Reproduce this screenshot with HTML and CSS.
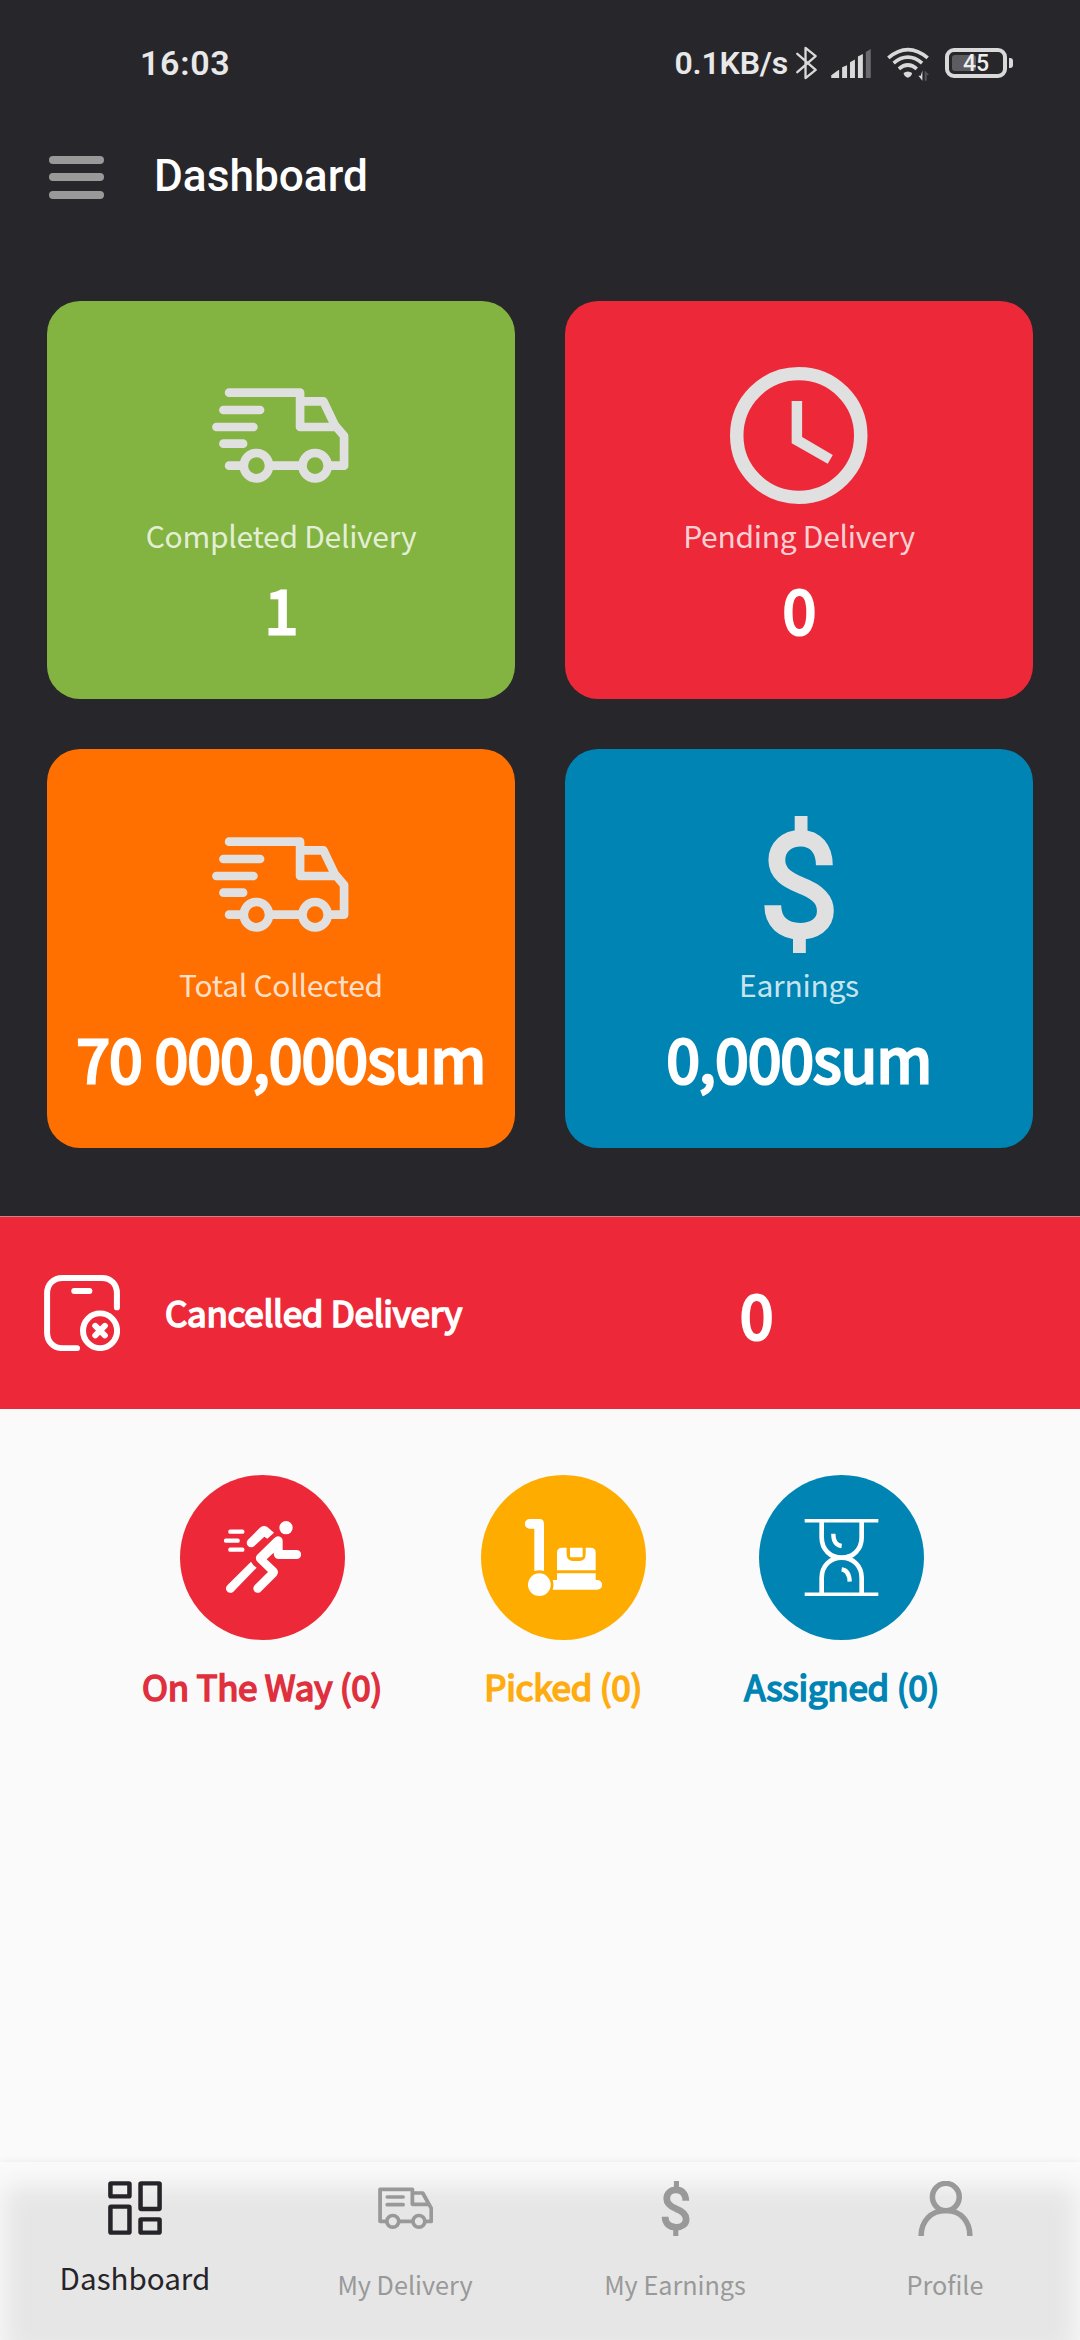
FILE: index.html
```html
<!DOCTYPE html>
<html lang="en">
<head>
<meta charset="utf-8">
<title>Dashboard</title>
<link rel="stylesheet" href="styles.css">
</head>
<body>
<svg class="sprite" aria-hidden="true">
  <symbol id="truck" viewBox="546 231 412 411">
    <g fill="none" stroke="currentColor" stroke-width="26" stroke-linecap="round" stroke-linejoin="round">
      <path d="M597 308H810V411H914M810 334H880L914 405L942 438V527H905M580 360H690M559 411H670M580 461H639M597 527H635M725 527H808"/>
      <circle cx="679" cy="527" r="38"/><circle cx="855" cy="527" r="38"/>
    </g>
  </symbol>
  <symbol id="dollar" viewBox="533 225 408 414" preserveAspectRatio="none">
    <path d="M813 374C813 325 787 292 743 292C700 292 672 320 672 358C672 400 705 418 742 434C790 452 816 475 816 512C816 552 782 573 741 573C692 573 660 545 660 495" fill="none" stroke="currentColor" stroke-width="50"/>
    <path d="M725 225H763V280H725ZM720 585H758V639H720Z" fill="currentColor"/>
  </symbol>
</svg>

<main class="screen">
  <section class="top">
    <div class="status">
      <span class="time">16:03</span>
      <div class="status-right">
        <span class="speed">0.1KB/s</span>
        <svg class="bt" viewBox="465 75 64 102"><path d="M469 98L525 147L494 172V80L525 105L469 154" fill="none" stroke="currentColor" stroke-width="7" stroke-linejoin="round" stroke-linecap="round"/></svg>
        <svg class="signal" viewBox="570 80 120 88"><path d="M570 168V160L592 144H594V168ZM603 168V135L618 129V168ZM627 168V120L642 112V168ZM651 168V103L666 95V168Z" fill="currentColor"/><path d="M675 168V89L690 80V168Z" fill="#6b6a6d"/></svg>
        <svg class="wifi" viewBox="738 80 127 101"><g fill="none" stroke="currentColor" stroke-width="11"><path d="M742 112Q801 62 861 112"/><path d="M758 128Q801 92 844 128"/><path d="M774 145Q801 122 828 145"/></g><path d="M788 158Q801 148 814 158Q812 169 801 172Q790 169 788 158Z" fill="currentColor"/><path d="M845 150V181L833 166H840Z" fill="currentColor"/><path d="M852 181V150L865 164H858V181Z" fill="#555458"/></svg>
        <div class="battery"><span class="charge"></span><span class="level">45</span></div>
      </div>
    </div>
    <header class="appbar">
      <div class="menu"><i></i><i></i><i></i></div>
      <h1>Dashboard</h1>
    </header>
    <div class="cards">
      <article class="card green">
        <svg class="icon"><use href="#truck"/></svg>
        <p class="label">Completed Delivery</p>
        <p class="value">1</p>
      </article>
      <article class="card red">
        <svg class="icon" viewBox="533 231 408 411" preserveAspectRatio="none"><ellipse cx="737" cy="436.500" rx="184" ry="185.500" fill="none" stroke="currentColor" stroke-width="40"/><path d="M716 333H747V441L838 495L823 521L716 460Z" fill="currentColor"/></svg>
        <p class="label">Pending Delivery</p>
        <p class="value">0</p>
      </article>
      <article class="card orange">
        <svg class="icon"><use href="#truck"/></svg>
        <p class="label">Total Collected</p>
        <p class="value">70 000,000sum</p>
      </article>
      <article class="card blue">
        <svg class="icon"><use href="#dollar"/></svg>
        <p class="label">Earnings</p>
        <p class="value">0,000sum</p>
      </article>
    </div>
  </section>

  <section class="cancelled">
    <svg class="cancel-icon" viewBox="128 225 221 229" preserveAspectRatio="none"><g fill="none" stroke="currentColor" stroke-width="17.500" stroke-linecap="round"><path d="M224 444H182C155 444 137 424 137 398V280C137 253 155 234 182 234H296C323 234 340 253 340 280V322"/><path d="M216 273H260"/><ellipse cx="291" cy="392" rx="49.500" ry="52"/><path d="M277 377L305 406M305 377L277 406"/></g></svg>
    <p class="cancel-text">Cancelled Delivery</p>
    <p class="cancel-value">0</p>
  </section>

  <section class="states">
    <div class="state way">
      <div class="disc"><svg viewBox="192 207 231 231"><circle cx="378" cy="233" r="20" fill="currentColor"/><path d="M211 245H247M198 272H233M211 299H247" fill="none" stroke="currentColor" stroke-width="13" stroke-linecap="round"/><path d="M264 269L299 234Q309 224 322 231L342 248L322 266L313 260L283 288A13 13 0 0 1 264 269Z" fill="currentColor"/><path d="M291 315L343 264Q352 255 363 262Q368 266 368 273V300H410A13 13 0 0 1 410 327H355Q341 325 341 308L320 328L350 356Q358 366 350 377L302 425A13 13 0 0 1 284 406L324 366L293 336Q283 326 291 315ZM273 335Q280 348 290 353L220 425A13 13 0 0 1 202 406Z" fill="currentColor"/></svg></div>
      <p>On The Way (0)</p>
    </div>
    <div class="state picked">
      <div class="disc"><svg viewBox="225 207 231 231"><g fill="currentColor"><path d="M239 207H268Q282 207 282 222V363Q268 358 253 363V236H239A14.500 14.500 0 0 1 239 207Z"/><circle cx="268" cy="404" r="34"/><path d="M321 361V308Q321 293 336 293H350V313Q350 333 369 333H388Q407 333 407 313V293H422Q437 293 437 308V361Z"/><path d="M360 293H398V318Q398 322 394 322H364Q360 322 360 318Z"/><path d="M321 370H437V390H442A14.500 14.500 0 0 1 442 419H308Q313 404 308 390H321Z"/></g></svg></div>
      <p>Picked (0)</p>
    </div>
    <div class="state assigned">
      <div class="disc"><svg viewBox="247 207 231 231"><g fill="none" stroke="currentColor"><path d="M252 212H473M252 433H473" stroke-width="11"/><path d="M303 212V262C303 300 330 323 363 323C396 323 423 300 423 262V212M303 433V384C303 346 330 323 363 323C396 323 423 346 423 384V433" stroke-width="14"/><path d="M338 251Q338 285 363 288M363 358Q386 361 387 395" stroke-width="13"/></g></svg></div>
      <p>Assigned (0)</p>
    </div>
  </section>

  <nav class="tabs">
    <a class="tab active">
      <svg viewBox="314 123 156 162" preserveAspectRatio="none"><g fill="none" stroke="currentColor" stroke-width="13" stroke-linejoin="round"><rect x="321" y="130" width="55" height="39" rx="2"/><rect x="408" y="130" width="55" height="77" rx="2"/><rect x="321" y="200" width="55" height="78" rx="2"/><rect x="408" y="238" width="55" height="40" rx="2"/></g></svg>
      <span>Dashboard</span>
    </a>
    <a class="tab">
      <svg viewBox="1094 123 160 165" preserveAspectRatio="none"><g fill="none" stroke="currentColor" stroke-width="11" stroke-linecap="round" stroke-linejoin="round"><path d="M1116 244H1100V148H1194V193H1238M1194 159H1224L1249 205V244H1234M1158 244H1192M1121 171H1167M1121 194H1167"/><circle cx="1137" cy="244" r="17.500"/><circle cx="1213" cy="244" r="17.500"/></g></svg>
      <span>My Delivery</span>
    </a>
    <a class="tab">
      <svg><use href="#dollar"/></svg>
      <span>My Earnings</span>
    </a>
    <a class="tab">
      <svg viewBox="1094 123 160 165" preserveAspectRatio="none"><g fill="none" stroke="currentColor" stroke-width="16"><ellipse cx="1175" cy="171" rx="39" ry="41"/><path d="M1103 288C1103 245 1130 212 1175 212C1220 212 1245 245 1245 288"/></g></svg>
      <span>Profile</span>
    </a>
  </nav>
</main>
</body>
</html>
```

FILE: styles.css
```css
* { box-sizing: border-box; }
body { margin: 0; background: #fafafa; font-family: "Noto Sans CJK SC", sans-serif; }
p, h1 { margin: 0; white-space: nowrap; }
.sprite { display: none; }
svg { display: block; flex: none; }
.screen { width: 1080px; height: 2340px; display: flex; flex-direction: column; overflow: hidden; }

.top { height: 1216px; flex: none; background: #27262b; }
.status { height: 126px; display: flex; align-items: center; justify-content: space-between; padding: 0 67px 0 140px; font-family: Roboto, sans-serif; color: #e8e8e8; }
.time { font-size: 34px; font-weight: 600; letter-spacing: 0.7px; }
.status-right { display: flex; align-items: center; color: #d9d9d9; }
.speed { font-size: 32px; font-weight: 600; letter-spacing: -0.2px; color: #e8e8e8; }
.bt { width: 21px; height: 34px; margin-left: 8px; }
.signal { width: 40px; height: 29px; margin-left: 14px; }
.wifi { width: 42px; height: 34px; margin: 2px 0 0 16px; }
.battery { position: relative; width: 62px; height: 30px; margin: 0 6px 0 16px; border: 4px solid #d9d9d9; border-radius: 9px; display: flex; align-items: center; justify-content: center; }
.battery::after { content: ""; position: absolute; right: -10px; top: 6px; width: 4px; height: 10px; border-radius: 0 3px 3px 0; background: #d9d9d9; }
.charge { position: absolute; left: 3px; top: 3px; width: 24px; height: 16px; border-radius: 3px; background: #5d5c60; }
.level { position: relative; top: 1px; font-size: 23px; font-weight: 500; line-height: 22px; color: #eee; }

.appbar { height: 100px; display: flex; align-items: center; padding: 2px 0 0 49px; gap: 50px; }
.menu { display: flex; flex-direction: column; gap: 9.500px; width: 55px; }
.menu i { height: 8px; border-radius: 4px; background: #999; }
.appbar h1 { margin-top: -2px; font: 500 44.200px Roboto, sans-serif; color: #fff; }

.cards { display: grid; grid-template-columns: 468px 468px; grid-auto-rows: 398.500px; gap: 50px; padding: 74.500px 0 0 47px; }
.card { display: flex; flex-direction: column; align-items: center; padding-top: 66.500px; border-radius: 33px; color: #e0e0e0; }
.green { background: #83b441; }
.red { background: #ed2939; }
.orange { background: #ff7000; }
.blue { background: #0084b4; }
.icon { width: 137.500px; height: 137px; }
.label { margin-top: 9px; font-size: 30px; line-height: 44px; letter-spacing: -0.280px; color: rgba(255, 255, 255, .8); }
.value { margin-top: 21px; font-size: 60px; line-height: 60px; letter-spacing: -0.600px; color: #fff; -webkit-text-stroke: 3px #fff; }

.cancelled { height: 193px; flex: none; display: flex; align-items: center; padding-left: 44px; background: #ed2939; color: #fff; border-top: 1px solid #c98289; }
.cancel-icon { width: 76px; height: 76.500px; }
.cancel-text { width: 620px; flex: none; margin-top: -3px; padding-left: 45px; font-size: 35px; letter-spacing: -0.280px; -webkit-text-stroke: 1.700px #fff; }
.cancel-value { font-size: 60px; line-height: 60px; -webkit-text-stroke: 3px #fff; }

.states { flex: 1; display: flex; justify-content: space-between; padding: 66px 141px 0 142px; }
.state { display: flex; flex-direction: column; align-items: center; color: #e02f3d; }
.disc { width: 165px; height: 165px; border-radius: 50%; display: flex; align-items: center; justify-content: center; background: #ed2939; color: #fff; }
.disc svg { width: 77px; height: 77px; }
.state p { margin-top: 21px; font-size: 35px; line-height: 50px; letter-spacing: -0.250px; -webkit-text-stroke: 1.700px currentColor; }
.picked { color: #ffac10; }
.picked .disc { background: #ffac00; }
.assigned { color: #0084b4; }
.assigned .disc { background: #0084b4; }

.tabs { height: 178px; flex: none; display: grid; grid-template-columns: repeat(4, 1fr); background: #e6e6e6; box-shadow: 0 -1px 6px rgba(0, 0, 0, .06), inset 0 20px 24px 4px #fafafa; }
.tab { display: flex; flex-direction: column; align-items: center; padding-top: 19px; color: #999; }
.tab svg { width: 55px; height: 55px; }
.tab span { margin-top: 27px; font-size: 25.200px; line-height: 42px; }
.active { color: #262428; }
.active svg { width: 54px; height: 54px; }
.active span { margin-top: 22px; font-size: 29.600px; }
```
